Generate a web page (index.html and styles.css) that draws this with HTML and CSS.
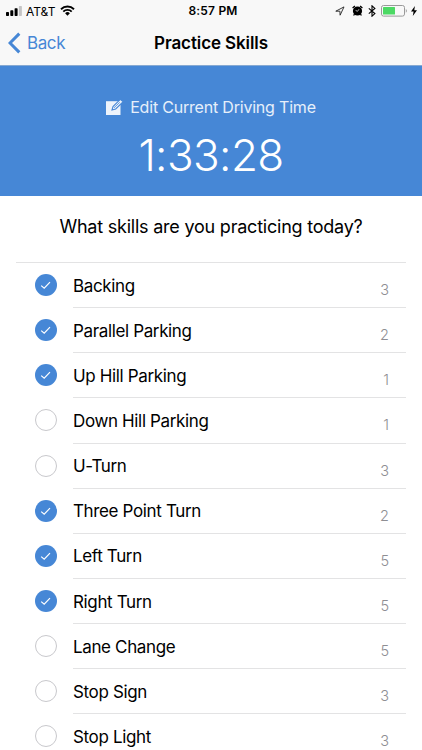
FILE: index.html
```html
<!DOCTYPE html>
<html lang="en">
<head>
    <meta charset="UTF-8">
    <meta name="viewport" content="width=device-width, initial-scale=1.0">
    <title>Practice Skills</title>
    <link rel="stylesheet" href="styles.css">
</head>
<body>
    <header class="header">
        <div class="status-bar">
            <div class="status-left">
                <svg class="signal" width="17" height="10" viewBox="0 0 17 10">
                    <rect x="0" y="6" width="3" height="4" rx=".7"/>
                    <rect x="4.3" y="4.3" width="3" height="5.7" rx=".7"/>
                    <rect x="8.6" y="2.3" width="3" height="7.7" rx=".7"/>
                    <rect x="12.9" y="0" width="3" height="10" rx=".7" fill="#c4c4c5"/>
                </svg>
                <span class="carrier">AT&amp;T</span>
                <svg class="wifi" width="15" height="11" viewBox="0 0 15 11">
                    <path d="M1 4.2a9.3 9.3 0 0 1 13 0M3.3 6.6a6 6 0 0 1 8.4 0" fill="none" stroke="#000" stroke-width="1.9"/>
                    <path d="M5.1 8.3a3.4 3.4 0 0 1 4.8 0L7.5 10.8z"/>
                </svg>
            </div>
            <span class="clock">8:57 PM</span>
            <div class="status-right">
                <svg width="10" height="10" viewBox="0 0 10 10">
                    <path d="M.8 5.2 9 .9 5.1 9.2 4.9 5.2z" fill="none" stroke="#222" stroke-width=".9" stroke-linejoin="round"/>
                </svg>
                <svg class="alarm" width="11" height="11" viewBox="0 0 11 11">
                    <circle cx="5.5" cy="6" r="4.6"/>
                    <path d="M.6 2.9 2.9.9M10.4 2.9 8.1.9M2.5 9.2 1.6 10.5M8.5 9.2 9.4 10.5" stroke="#000" stroke-width="1.3"/>
                    <path d="M3.6 5.4 5.5 6.3 7 4.2" fill="none" stroke="#f8f8f8" stroke-width=".7"/>
                </svg>
                <svg class="bluetooth" width="8" height="12" viewBox="0 0 8 12">
                    <path d="M.8 3.3 6.9 8.6 4 11.2V.8L6.9 3.4.8 8.7" fill="none" stroke="#000" stroke-width="1.1"/>
                </svg>
                <svg class="battery" width="27" height="12" viewBox="0 0 27 12">
                    <rect x=".5" y=".5" width="23" height="10.6" rx="2" fill="none" stroke="#999"/>
                    <rect x="2" y="2" width="12" height="7.6" rx=".5" fill="#4cd964"/>
                    <path d="M24.8 4v3.7c1.4-.6 1.4-3.1 0-3.7z" fill="#999"/>
                </svg>
                <svg class="bolt" width="6" height="10" viewBox="0 0 6 10">
                    <path d="M3.9 0 0 5.6h2.6L1.8 10 6 4.2H3.3z"/>
                </svg>
            </div>
        </div>
        <nav class="nav">
            <a class="back" href="#">
                <svg width="13" height="22" viewBox="0 0 13 22">
                    <path d="M11.3 1.6 2 11l9.3 9.4" fill="none" stroke="#4687d6" stroke-width="3"/>
                </svg>
                <span>Back</span>
            </a>
            <h1 class="title">Practice Skills</h1>
        </nav>
    </header>

    <section class="timer">
        <a class="edit-time" href="#">
            <svg width="18" height="17" viewBox="0 0 18 17">
                <path d="M0 2.2h14.5V16H0z" fill="#edf3fb"/>
                <path d="M6 11 7 7.5 14.3.4 17.2 2.7 9.7 10z" fill="#edf3fb" stroke="#4687d6" stroke-width="1.1"/>
                <path d="M8 8.8 13.8 3.3" stroke="#4687d6" stroke-width=".8"/>
            </svg>
            <span>Edit Current Driving Time</span>
        </a>
        <div class="time">1:33:28</div>
    </section>

    <main>
        <h2 class="question">What skills are you practicing today?</h2>
        <ul class="skills" id="skills"></ul>
    </main>

    <script>
        const skills = [
            { name: "Backing", count: 3, checked: true },
            { name: "Parallel Parking", count: 2, checked: true },
            { name: "Up Hill Parking", count: 1, checked: true },
            { name: "Down Hill Parking", count: 1, checked: false },
            { name: "U-Turn", count: 3, checked: false },
            { name: "Three Point Turn", count: 2, checked: true },
            { name: "Left Turn", count: 5, checked: true },
            { name: "Right Turn", count: 5, checked: true },
            { name: "Lane Change", count: 5, checked: false },
            { name: "Stop Sign", count: 3, checked: false },
            { name: "Stop Light", count: 3, checked: false }
        ];

        const tick = '<svg width="22" height="22" viewBox="0 0 22 22"><path d="M6.2 11.6 9.2 14.2 15 8.2" fill="none" stroke="#fff" stroke-width="1.2"/></svg>';

        document.getElementById('skills').innerHTML = skills.map(skill => `
            <li class="skill">
                <span class="check ${skill.checked ? 'checked' : ''}">${skill.checked ? tick : ''}</span>
                <div class="skill-body">
                    <span class="skill-name">${skill.name}</span>
                    <span class="skill-count">${skill.count}</span>
                </div>
            </li>
        `).join('');
    </script>
</body>
</html>
```
FILE: styles.css
```css
* {
    box-sizing: border-box;
}
body {
    font-family: Inter, "Liberation Sans", sans-serif;
    margin: 0;
    height: 750px;
    overflow: hidden;
    background-color: #fff;
    color: #000;
}
svg {
    display: block;
    flex: none;
}
a {
    text-decoration: none;
}
.header {
    height: 66px;
    background-color: #f8f8f8;
    border-bottom: 1px solid #86a9d2;
}
.status-bar {
    display: grid;
    grid-template-columns: 1fr auto 1fr;
    align-items: center;
    height: 21px;
    padding: 0 5px 0 6px;
}
.status-left,
.status-right {
    display: flex;
    align-items: center;
}
.status-right {
    justify-content: flex-end;
}
.carrier {
    font-size: 12px;
    margin: 1px 5px 0 3px;
}
.clock {
    font-size: 12px;
    font-weight: 600;
    letter-spacing: 0.2px;
    padding-left: 3px;
}
.alarm {
    margin-left: 7px;
}
.bluetooth {
    margin-left: 5px;
}
.battery {
    margin-left: 5px;
}
.bolt {
    margin-left: 3px;
}
.nav {
    display: grid;
    grid-template-columns: 1fr auto 1fr;
    align-items: center;
    height: 43px;
    padding: 0 8px;
}
.back {
    display: flex;
    align-items: center;
    gap: 6px;
    color: #4687d6;
    font-size: 17px;
    letter-spacing: -0.4px;
}
.title {
    margin: 0;
    font-size: 17px;
    font-weight: 600;
    letter-spacing: -0.1px;
}
.timer {
    display: flex;
    flex-direction: column;
    align-items: center;
    height: 130px;
    padding-top: 31px;
    background-color: #4687d6;
    color: #fff;
}
.edit-time {
    display: flex;
    align-items: center;
    gap: 6px;
    color: #e6effa;
    font-size: 16px;
    line-height: 20px;
    letter-spacing: -0.2px;
}
.time {
    margin-top: 11px;
    font-size: 44px;
    font-weight: 300;
    line-height: 54px;
    letter-spacing: -0.6px;
}
.question {
    margin: 0;
    height: 66px;
    padding-top: 19px;
    font-size: 18px;
    font-weight: 400;
    line-height: 24px;
    letter-spacing: -0.22px;
    text-align: center;
}
.skills {
    list-style: none;
    margin: 0 16px;
    padding: 0;
    border-top: 1px solid #e3e3e4;
}
.skill {
    display: flex;
    align-items: center;
    height: 45.15px;
    padding-left: 18.5px;
}
.check {
    flex: none;
    width: 22px;
    height: 22px;
    margin-bottom: 1px;
    border: 1px solid #c8c8cc;
    border-radius: 50%;
}
.check.checked {
    border: none;
    background-color: #4687d6;
}
.skill-body {
    display: flex;
    flex: 1;
    align-items: center;
    justify-content: space-between;
    height: 100%;
    margin-left: 16.5px;
    padding-right: 17px;
    border-bottom: 1px solid #e3e3e4;
}
.skill-name {
    padding-top: 1px;
    font-size: 17px;
    letter-spacing: -0.36px;
}
.skill-count {
    padding-top: 9px;
    color: #8e8e93;
    font-size: 14.5px;
    font-weight: 300;
}
```
